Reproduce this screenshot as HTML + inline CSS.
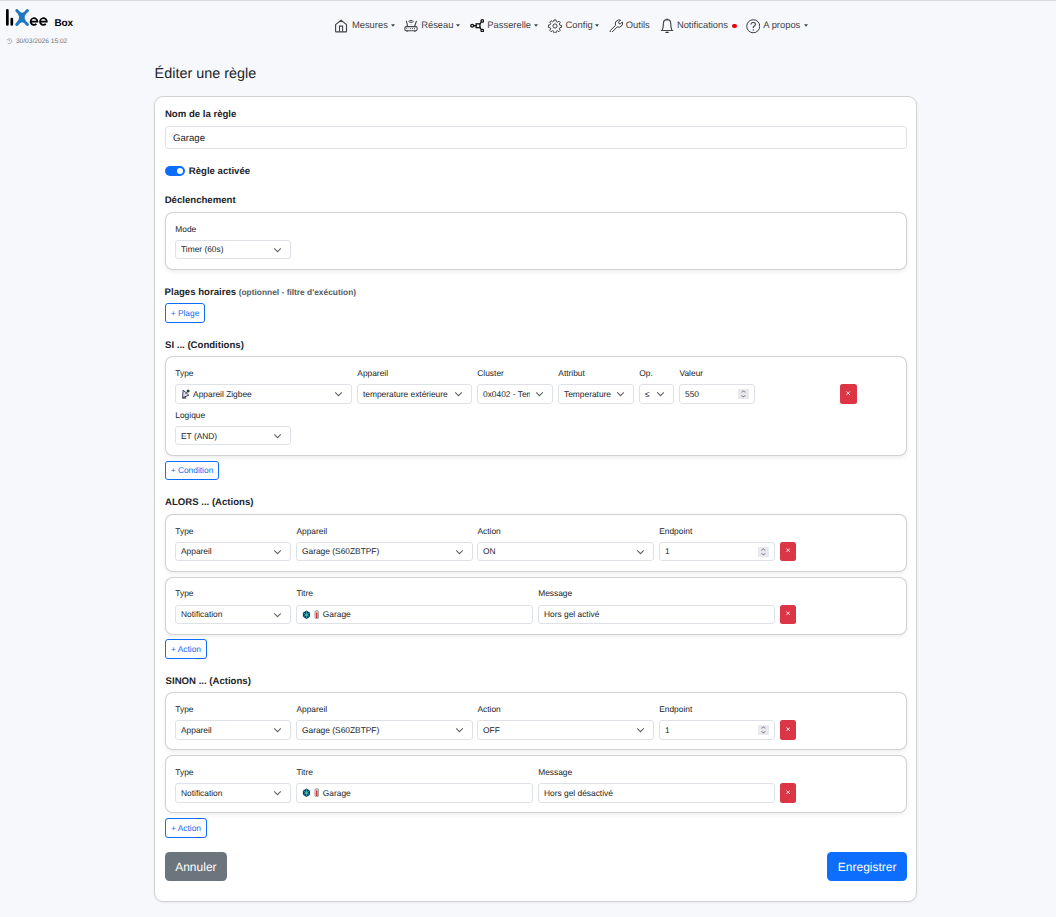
<!DOCTYPE html><html><head><meta charset="utf-8"><title>LiXee Box</title><style>
*{box-sizing:border-box}
html,body{margin:0;padding:0}
body{text-rendering:geometricPrecision;width:1056px;height:917px;position:relative;overflow:hidden;background:#f7f8fc;font-family:"Liberation Sans",sans-serif;color:#212529}
.t{position:absolute;white-space:nowrap;line-height:1}
.b{font-weight:bold}
.card,.ic,.ctl,.dbtn,.obtn,.btn{position:absolute}
.card{background:#fff;border:1px solid rgba(0,0,0,.18);border-radius:9px;box-shadow:0 1px 3px rgba(0,0,0,.05)}
.ic{background:#fff;border:1px solid rgba(0,0,0,.18);border-radius:8px;box-shadow:0 1.5px 4px rgba(0,0,0,.07)}
.ctl{background:#fff;border:1px solid #dee2e6;border-radius:3px}
.chev{position:absolute;right:7.9px;top:50%;width:9px;height:6px;margin-top:-3px}
.spin{position:absolute;right:5.5px;top:50%;width:11px;height:10px;margin-top:-5px;background:#e9e9ed}
.spin svg{position:absolute;left:0;top:0}
.dbtn{background:#dc3545;border-radius:2.5px}
.obtn{border:1px solid #0d6efd;border-radius:3px;background:#fff}
.btn{border-radius:4.5px}
</style></head><body>
<div style="position:absolute;left:0;top:0;width:1056px;height:1px;background:#dbdbdd"></div>
<svg style="position:absolute;left:0;top:0" width="60" height="30" viewBox="0 0 60 30">
<g stroke="#fff" stroke-width="1.6" fill="none" opacity=".9">
<path d="M7.35 10.4V24.4M11.8 19V24.4"/>
</g>
<path d="M7.35 10.4V24.4M11.8 19V24.4" stroke="#000" stroke-linecap="round" fill="none" stroke-width="2.7"/>
<path d="M18.18 9.64Q22.1 15.76 26.02 9.64A1.6 1.6 0 0 1 28.58 11.56Q20.7 17.5 28.58 23.44A1.6 1.6 0 0 1 26.02 25.36Q22.1 19.24 18.18 25.36A1.6 1.6 0 0 1 15.62 23.44Q23.1 17.5 15.62 11.56A1.6 1.6 0 0 1 18.18 9.64Z" fill="#1f78c1"/>
<path d="M30.6 21.55H37.4A3.4 3.4 0 1 0 36.4 23.95M40.0 21.55H46.8A3.4 3.4 0 1 0 45.8 23.95" fill="none" stroke="#000" stroke-width="1.75"/>
</svg>
<div class="t b" style="left:54.60px;top:19.14px;font-size:10.0px;color:#000;letter-spacing:-0.25px">Box</div>
<svg style="position:absolute;left:6px;top:38px" width="7" height="6" viewBox="0 0 14 12"><path d="M4 2.2A5 5 0 1 1 3 9.8" fill="none" stroke="#999" stroke-width="1.3"/><path d="M7 3.5V6.5L9 8" fill="none" stroke="#999" stroke-width="1.2"/><path d="M1.5 4.5 3.4 2 4.6 4.8" fill="none" stroke="#999" stroke-width="1"/></svg>
<div class="t " style="left:15.90px;top:38.81px;font-size:6.6px;color:#6c757d">30/03/2026 15:02</div>
<svg style="position:absolute;left:332px;top:16px" width="20" height="20" viewBox="0 0 20 20"><path d="M3.6 8.6 9.05 4.2 14.5 8.6V15.2Q14.5 15.8 13.9 15.8H4.2Q3.6 15.8 3.6 15.2Z" fill="none" stroke="#444" stroke-width="1.15" stroke-linejoin="round"/><path d="M7.5 15.8V10.1H10.6V15.8" fill="none" stroke="#444" stroke-width="1.1"/></svg>
<div class="t " style="left:351.90px;top:20.14px;font-size:9.4px;color:#3f4347">Mesures</div>
<svg style="position:absolute;left:390.6px;top:23.8px" width="4" height="3" viewBox="0 0 8 5"><path d="M0 0H8L4 5Z" fill="#3f4347"/></svg>
<svg style="position:absolute;left:402px;top:16px" width="20" height="20" viewBox="0 0 20 20" fill="none" stroke="#444"><rect x="2.85" y="10.6" width="12.3" height="4.1" rx="1.3" stroke-width="1.05"/><path d="M4.4 15.2H6.1M12 15.2H13.7" stroke-width=".9"/><path d="M4.4 4.9 5.6 10.3M14.5 5 12.6 10.3" stroke-width="1.1"/><path d="M6.4 5.5Q9 3.3 11.6 5.5M7.5 6.5Q9 5.6 10.5 6.5" stroke-width="1"/><g fill="#555" stroke="none"><circle cx="4.4" cy="12.6" r=".55"/><circle cx="8.5" cy="12.6" r=".55"/><circle cx="10.5" cy="12.6" r=".55"/><circle cx="12.5" cy="12.6" r=".55"/><circle cx="9" cy="8.2" r=".45"/><rect x="5.6" y="12.4" width="1.2" height=".4"/></g></svg>
<div class="t " style="left:421.20px;top:20.14px;font-size:9.4px;color:#3f4347">Réseau</div>
<svg style="position:absolute;left:456px;top:23.8px" width="4" height="3" viewBox="0 0 8 5"><path d="M0 0H8L4 5Z" fill="#3f4347"/></svg>
<svg style="position:absolute;left:469.5px;top:18.9px" width="14.5" height="13.5" viewBox="0 0 16 15"><circle cx="2.4" cy="7.5" r="1.6" fill="none" stroke="#111" stroke-width="1.5"/><rect x="6.8" y="5.4" width="4.2" height="4.2" fill="none" stroke="#111" stroke-width="1.5"/><circle cx="13.6" cy="2.1" r="1.4" fill="none" stroke="#111" stroke-width="1.4"/><circle cx="13.6" cy="12.9" r="1.4" fill="none" stroke="#111" stroke-width="1.4"/><path d="M4 7.5H6.8M10.8 5.6 12.6 3.1M10.8 9.4 12.6 11.9" stroke="#111" stroke-width="1.5"/></svg>
<div class="t " style="left:487.30px;top:20.14px;font-size:9.4px;color:#3f4347">Passerelle</div>
<svg style="position:absolute;left:534.3px;top:23.8px" width="4" height="3" viewBox="0 0 8 5"><path d="M0 0H8L4 5Z" fill="#3f4347"/></svg>
<svg style="position:absolute;left:547.8px;top:19px" width="14" height="14" viewBox="0 0 16 16"><path d="M6.9 1h2.2l.4 2 1.3.6 1.7-1.1 1.5 1.5-1.1 1.7.6 1.3 2 .4v2.2l-2 .4-.6 1.3 1.1 1.7-1.5 1.5-1.7-1.1-1.3.6-.4 2H6.9l-.4-2-1.3-.6-1.7 1.1-1.5-1.5 1.1-1.7-.6-1.3-2-.4V6.9l2-.4.6-1.3-1.1-1.7 1.5-1.5 1.7 1.1 1.3-.6z" fill="none" stroke="#3a3a3a" stroke-width="1.1" stroke-linejoin="round"/><circle cx="8" cy="8" r="2.4" fill="none" stroke="#3a3a3a" stroke-width="1.1"/></svg>
<div class="t " style="left:565.60px;top:20.14px;font-size:9.4px;color:#3f4347">Config</div>
<svg style="position:absolute;left:595px;top:23.8px" width="4" height="3" viewBox="0 0 8 5"><path d="M0 0H8L4 5Z" fill="#3f4347"/></svg>
<svg style="position:absolute;left:608.8px;top:18.7px" width="14.5" height="13.6" viewBox="0 0 16 15"><path d="M1.6 12.6 7.2 7Q6.2 4.2 8.2 2.2Q10.2 .4 12.8 1.2L10.6 3.4 11 5 12.6 5.4 14.8 3.2Q15.6 5.8 13.8 7.8Q11.8 9.8 9 8.8L3.4 14.4Q2.5 15.2 1.6 14.4Q.8 13.5 1.6 12.6Z" fill="none" stroke="#3a3a3a" stroke-width="1.1" stroke-linejoin="round"/></svg>
<div class="t " style="left:625.80px;top:20.14px;font-size:9.4px;color:#3f4347">Outils</div>
<svg style="position:absolute;left:656px;top:16px" width="24" height="20" viewBox="0 0 24 20"><path d="M6.3 14.2C7 12 7.4 10 7.4 7.6 7.4 5.2 9 3.7 11.05 3.7 13.1 3.7 14.7 5.2 14.7 7.6 14.7 10 15.1 12 15.8 14.2M5.3 14.5H16.8M11.05 2.8V3.8" fill="none" stroke="#444" stroke-width="1.15" stroke-linecap="round" stroke-linejoin="round"/><path d="M9.9 16.3H12.2" stroke="#333" stroke-width="1.3" stroke-linecap="round"/></svg>
<div class="t " style="left:676.90px;top:20.14px;font-size:9.4px;color:#3f4347">Notifications</div>
<div style="position:absolute;left:732.2px;top:23.6px;width:4.8px;height:4.8px;border-radius:50%;background:#e8000b"></div>
<svg style="position:absolute;left:745.5px;top:19px" width="14.5" height="14.5" viewBox="0 0 16 16"><circle cx="8" cy="8" r="7.2" fill="none" stroke="#3a3a3a" stroke-width="1.1"/><path d="M5.6 6.1Q5.6 3.8 8 3.8Q10.4 3.8 10.4 5.9Q10.4 7.2 8.9 7.9Q8 8.4 8 9.6V10" fill="none" stroke="#3a3a3a" stroke-width="1.2"/><circle cx="8" cy="12" r=".8" fill="#3a3a3a"/></svg>
<div class="t " style="left:763.30px;top:20.14px;font-size:9.4px;color:#3f4347">A propos</div>
<svg style="position:absolute;left:804px;top:23.8px" width="4" height="3" viewBox="0 0 8 5"><path d="M0 0H8L4 5Z" fill="#3f4347"/></svg>
<div class="t " style="left:154.60px;top:66.51px;font-size:14.4px;">Éditer une règle</div>
<div class="card" style="left:154px;top:96px;width:763px;height:806px;"></div>
<div class="t b" style="left:164.90px;top:109.67px;font-size:9.6px;">Nom de la règle</div>
<div class="ctl" style="left:165px;top:126px;width:742px;height:23px;"><div class="t" style="left:7.0px;top:6.77px;font-size:9.6px">Garage</div></div>
<div style="position:absolute;left:165px;top:166px;width:20px;height:10px;border-radius:5px;background:#0d6efd"><div style="position:absolute;right:1.8px;top:1.8px;width:6.4px;height:6.4px;border-radius:50%;background:#fff"></div></div>
<div class="t b" style="left:188.80px;top:166.87px;font-size:9.6px;">Règle activée</div>
<div class="t b" style="left:164.70px;top:195.87px;font-size:9.6px;">Déclenchement</div>
<div class="ic" style="left:165px;top:212px;width:742px;height:58px;"></div>
<div class="t " style="left:175.30px;top:224.79px;font-size:8.4px;">Mode</div>
<div class="ctl sel" style="left:175px;top:240px;width:116px;height:19px;"><div class="t" style="left:5.0px;right:21.6px;overflow:hidden;line-height:1.4;top:2.71px;font-size:8.4px">Timer (60s)</div><svg class="chev" viewBox="0 0 9 6"><path d="M1.2 1.4 4.5 4.7 7.8 1.4" fill="none" stroke="#5d6166" stroke-width="1.05"/></svg></div>
<div class="t b" style="left:164.60px;top:287.87px;font-size:9.6px;">Plages horaires <span style="font-size:8.4px;color:#565c62">(optionnel - filtre d'exécution)</span></div>
<div class="obtn" style="left:165px;top:303px;width:40px;height:20px;"><div class="t" style="left:0;width:100%;text-align:center;top:4.89px;font-size:8.4px;color:#0d6efd">+ Plage</div></div>
<div class="t b" style="left:165.00px;top:341.17px;font-size:9.6px;">SI ... (Conditions)</div>
<div class="ic" style="left:165px;top:356px;width:742px;height:100px;"></div>
<div class="t " style="left:175.30px;top:369.29px;font-size:8.4px;">Type</div>
<div class="t " style="left:357.30px;top:369.29px;font-size:8.4px;">Appareil</div>
<div class="t " style="left:477.30px;top:369.29px;font-size:8.4px;">Cluster</div>
<div class="t " style="left:558.30px;top:369.29px;font-size:8.4px;">Attribut</div>
<div class="t " style="left:639.30px;top:369.29px;font-size:8.4px;">Op.</div>
<div class="t " style="left:679.50px;top:369.29px;font-size:8.4px;">Valeur</div>
<div class="ctl sel" style="left:175px;top:384px;width:177px;height:20px;"><svg width="10" height="10" viewBox="0 0 10 10" style="position:absolute;left:4.8px;top:4.4px"><path d="M1.6 8.6 2.1 1.2 7.9 6.2Z" fill="#e6e6ea" stroke="#3d3a6e" stroke-width="1" stroke-linejoin="round"/><path d="M1.2 8.9H5.2" stroke="#444" stroke-width="1.4"/><path d="M4.2 5.2 6.4 2.6" stroke="#555" stroke-width=".8"/><circle cx="7.1" cy="1.9" r="1.5" fill="#1f4d1f"/></svg><div class="t" style="left:17.1px;right:21.6px;overflow:hidden;line-height:1.4;top:4.21px;font-size:8.4px">Appareil Zigbee</div><svg class="chev" viewBox="0 0 9 6"><path d="M1.2 1.4 4.5 4.7 7.8 1.4" fill="none" stroke="#5d6166" stroke-width="1.05"/></svg></div>
<div class="ctl sel" style="left:357px;top:384px;width:115px;height:20px;"><div class="t" style="left:5.0px;right:21.6px;overflow:hidden;line-height:1.4;top:4.21px;font-size:8.4px">temperature extérieure</div><svg class="chev" viewBox="0 0 9 6"><path d="M1.2 1.4 4.5 4.7 7.8 1.4" fill="none" stroke="#5d6166" stroke-width="1.05"/></svg></div>
<div class="ctl sel" style="left:477px;top:384px;width:76px;height:20px;"><div class="t" style="left:5.0px;right:21.6px;overflow:hidden;line-height:1.4;top:4.21px;font-size:8.4px">0x0402 - Temperature</div><svg class="chev" viewBox="0 0 9 6"><path d="M1.2 1.4 4.5 4.7 7.8 1.4" fill="none" stroke="#5d6166" stroke-width="1.05"/></svg></div>
<div class="ctl sel" style="left:558px;top:384px;width:76px;height:20px;"><div class="t" style="left:5.0px;right:21.6px;overflow:hidden;line-height:1.4;top:4.21px;font-size:8.4px">Temperature</div><svg class="chev" viewBox="0 0 9 6"><path d="M1.2 1.4 4.5 4.7 7.8 1.4" fill="none" stroke="#5d6166" stroke-width="1.05"/></svg></div>
<div class="ctl sel" style="left:639px;top:384px;width:35px;height:20px;"><div class="t" style="left:5.0px;right:21.6px;overflow:hidden;line-height:1.4;top:4.21px;font-size:8.4px">≤</div><svg class="chev" viewBox="0 0 9 6"><path d="M1.2 1.4 4.5 4.7 7.8 1.4" fill="none" stroke="#5d6166" stroke-width="1.05"/></svg></div>
<div class="ctl" style="left:679px;top:384px;width:76px;height:20px;"><div class="t" style="left:5.0px;top:4.89px;font-size:8.4px">550</div><div class="spin"><svg viewBox="0 0 11 10" width="11" height="10"><path d="M3.4 3.4 5.4 1.9 7.4 3.4M3.4 6.3 5.4 7.8 7.4 6.3" fill="none" stroke="#8f8f9d" stroke-width="1.05"/></svg></div></div>
<div class="dbtn" style="left:840px;top:384px;width:17px;height:20px;"><svg viewBox="0 0 10 10" style="position:absolute;left:50%;top:50%;width:4.4px;height:4.4px;margin:-3.1px 0 0 -2.3px"><path d="M1 1 9 9M9 1 1 9" stroke="#fff" stroke-width="2"/></svg></div>
<div class="t " style="left:175.30px;top:410.89px;font-size:8.4px;">Logique</div>
<div class="ctl sel" style="left:175px;top:426px;width:116px;height:19px;"><div class="t" style="left:5.0px;right:21.6px;overflow:hidden;line-height:1.4;top:3.71px;font-size:8.4px">ET (AND)</div><svg class="chev" viewBox="0 0 9 6"><path d="M1.2 1.4 4.5 4.7 7.8 1.4" fill="none" stroke="#5d6166" stroke-width="1.05"/></svg></div>
<div class="obtn" style="left:165px;top:461px;width:54px;height:19px;"><div class="t" style="left:0;width:100%;text-align:center;top:4.39px;font-size:8.4px;color:#0d6efd">+ Condition</div></div>
<div class="t b" style="left:165.00px;top:497.87px;font-size:9.6px;">ALORS ... (Actions)</div>
<div class="ic" style="left:165px;top:514px;width:742px;height:58px;"></div>
<div class="t " style="left:175.30px;top:526.69px;font-size:8.4px;">Type</div>
<div class="t " style="left:296.40px;top:526.69px;font-size:8.4px;">Appareil</div>
<div class="t " style="left:477.50px;top:526.69px;font-size:8.4px;">Action</div>
<div class="t " style="left:659.20px;top:526.69px;font-size:8.4px;">Endpoint</div>
<div class="ctl sel" style="left:175px;top:542px;width:116px;height:19px;"><div class="t" style="left:5.0px;right:21.6px;overflow:hidden;line-height:1.4;top:2.71px;font-size:8.4px">Appareil</div><svg class="chev" viewBox="0 0 9 6"><path d="M1.2 1.4 4.5 4.7 7.8 1.4" fill="none" stroke="#5d6166" stroke-width="1.05"/></svg></div>
<div class="ctl sel" style="left:296px;top:542px;width:177px;height:19px;"><div class="t" style="left:5.0px;right:21.6px;overflow:hidden;line-height:1.4;top:2.71px;font-size:8.4px">Garage (S60ZBTPF)</div><svg class="chev" viewBox="0 0 9 6"><path d="M1.2 1.4 4.5 4.7 7.8 1.4" fill="none" stroke="#5d6166" stroke-width="1.05"/></svg></div>
<div class="ctl sel" style="left:477px;top:542px;width:177px;height:19px;"><div class="t" style="left:5.0px;right:21.6px;overflow:hidden;line-height:1.4;top:2.71px;font-size:8.4px">ON</div><svg class="chev" viewBox="0 0 9 6"><path d="M1.2 1.4 4.5 4.7 7.8 1.4" fill="none" stroke="#5d6166" stroke-width="1.05"/></svg></div>
<div class="ctl" style="left:659px;top:542px;width:116px;height:19px;"><div class="t" style="left:5.0px;top:4.39px;font-size:8.4px">1</div><div class="spin"><svg viewBox="0 0 11 10" width="11" height="10"><path d="M3.4 3.4 5.4 1.9 7.4 3.4M3.4 6.3 5.4 7.8 7.4 6.3" fill="none" stroke="#8f8f9d" stroke-width="1.05"/></svg></div></div>
<div class="dbtn" style="left:780px;top:542px;width:16px;height:19px;"><svg viewBox="0 0 10 10" style="position:absolute;left:50%;top:50%;width:4.4px;height:4.4px;margin:-3.1px 0 0 -2.3px"><path d="M1 1 9 9M9 1 1 9" stroke="#fff" stroke-width="2"/></svg></div>
<div class="ic" style="left:165px;top:577px;width:742px;height:58px;"></div>
<div class="t " style="left:175.30px;top:588.69px;font-size:8.4px;">Type</div>
<div class="t " style="left:296.40px;top:588.69px;font-size:8.4px;">Titre</div>
<div class="t " style="left:538.20px;top:588.69px;font-size:8.4px;">Message</div>
<div class="ctl sel" style="left:175px;top:605px;width:116px;height:19px;"><div class="t" style="left:5.0px;right:21.6px;overflow:hidden;line-height:1.4;top:2.71px;font-size:8.4px">Notification</div><svg class="chev" viewBox="0 0 9 6"><path d="M1.2 1.4 4.5 4.7 7.8 1.4" fill="none" stroke="#5d6166" stroke-width="1.05"/></svg></div>
<div class="ctl" style="left:296px;top:605px;width:237px;height:19px;"><svg width="9" height="9.5" viewBox="0 0 10 10" style="position:absolute;left:5.4px;top:3.5px"><path d="M5 .4 9 2.7V7.3L5 9.6 1 7.3V2.7Z" fill="#16384f"/><path d="M5 1.2V8.8M1.7 3.1 8.3 6.9M8.3 3.1 1.7 6.9" stroke="#2fb0cf" stroke-width="1"/><circle cx="5" cy="5" r="1.2" fill="#3fd0a0"/></svg><svg width="5.5" height="9.5" viewBox="0 0 6 10" style="position:absolute;left:16.8px;top:3.5px"><rect x="1" y=".4" width="4" height="9.2" rx="2" fill="#d5d9df" stroke="#6f7480" stroke-width=".7"/><rect x="2.2" y="2.2" width="1.6" height="6.6" rx=".8" fill="#e0352b"/></svg><div class="t" style="left:25.8px;top:4.39px;font-size:8.4px">Garage</div></div>
<div class="ctl" style="left:538px;top:605px;width:237px;height:19px;"><div class="t" style="left:5.0px;top:4.39px;font-size:8.4px">Hors gel activé</div></div>
<div class="dbtn" style="left:780px;top:605px;width:16px;height:19px;"><svg viewBox="0 0 10 10" style="position:absolute;left:50%;top:50%;width:4.4px;height:4.4px;margin:-3.1px 0 0 -2.3px"><path d="M1 1 9 9M9 1 1 9" stroke="#fff" stroke-width="2"/></svg></div>
<div class="obtn" style="left:165px;top:639px;width:42px;height:20px;"><div class="t" style="left:0;width:100%;text-align:center;top:4.89px;font-size:8.4px;color:#0d6efd">+ Action</div></div>
<div class="t b" style="left:165.60px;top:676.87px;font-size:9.6px;">SINON ... (Actions)</div>
<div class="ic" style="left:165px;top:692px;width:742px;height:58px;"></div>
<div class="t " style="left:175.30px;top:704.69px;font-size:8.4px;">Type</div>
<div class="t " style="left:296.40px;top:704.69px;font-size:8.4px;">Appareil</div>
<div class="t " style="left:477.50px;top:704.69px;font-size:8.4px;">Action</div>
<div class="t " style="left:659.20px;top:704.69px;font-size:8.4px;">Endpoint</div>
<div class="ctl sel" style="left:175px;top:720px;width:116px;height:20px;"><div class="t" style="left:5.0px;right:21.6px;overflow:hidden;line-height:1.4;top:4.21px;font-size:8.4px">Appareil</div><svg class="chev" viewBox="0 0 9 6"><path d="M1.2 1.4 4.5 4.7 7.8 1.4" fill="none" stroke="#5d6166" stroke-width="1.05"/></svg></div>
<div class="ctl sel" style="left:296px;top:720px;width:177px;height:20px;"><div class="t" style="left:5.0px;right:21.6px;overflow:hidden;line-height:1.4;top:4.21px;font-size:8.4px">Garage (S60ZBTPF)</div><svg class="chev" viewBox="0 0 9 6"><path d="M1.2 1.4 4.5 4.7 7.8 1.4" fill="none" stroke="#5d6166" stroke-width="1.05"/></svg></div>
<div class="ctl sel" style="left:477px;top:720px;width:177px;height:20px;"><div class="t" style="left:5.0px;right:21.6px;overflow:hidden;line-height:1.4;top:4.21px;font-size:8.4px">OFF</div><svg class="chev" viewBox="0 0 9 6"><path d="M1.2 1.4 4.5 4.7 7.8 1.4" fill="none" stroke="#5d6166" stroke-width="1.05"/></svg></div>
<div class="ctl" style="left:659px;top:720px;width:116px;height:20px;"><div class="t" style="left:5.0px;top:4.89px;font-size:8.4px">1</div><div class="spin"><svg viewBox="0 0 11 10" width="11" height="10"><path d="M3.4 3.4 5.4 1.9 7.4 3.4M3.4 6.3 5.4 7.8 7.4 6.3" fill="none" stroke="#8f8f9d" stroke-width="1.05"/></svg></div></div>
<div class="dbtn" style="left:780px;top:720px;width:16px;height:20px;"><svg viewBox="0 0 10 10" style="position:absolute;left:50%;top:50%;width:4.4px;height:4.4px;margin:-3.1px 0 0 -2.3px"><path d="M1 1 9 9M9 1 1 9" stroke="#fff" stroke-width="2"/></svg></div>
<div class="ic" style="left:165px;top:755px;width:742px;height:58px;"></div>
<div class="t " style="left:175.30px;top:767.69px;font-size:8.4px;">Type</div>
<div class="t " style="left:296.40px;top:767.69px;font-size:8.4px;">Titre</div>
<div class="t " style="left:538.20px;top:767.69px;font-size:8.4px;">Message</div>
<div class="ctl sel" style="left:175px;top:783px;width:116px;height:20px;"><div class="t" style="left:5.0px;right:21.6px;overflow:hidden;line-height:1.4;top:4.21px;font-size:8.4px">Notification</div><svg class="chev" viewBox="0 0 9 6"><path d="M1.2 1.4 4.5 4.7 7.8 1.4" fill="none" stroke="#5d6166" stroke-width="1.05"/></svg></div>
<div class="ctl" style="left:296px;top:783px;width:237px;height:20px;"><svg width="9" height="9.5" viewBox="0 0 10 10" style="position:absolute;left:5.4px;top:3.5px"><path d="M5 .4 9 2.7V7.3L5 9.6 1 7.3V2.7Z" fill="#16384f"/><path d="M5 1.2V8.8M1.7 3.1 8.3 6.9M8.3 3.1 1.7 6.9" stroke="#2fb0cf" stroke-width="1"/><circle cx="5" cy="5" r="1.2" fill="#3fd0a0"/></svg><svg width="5.5" height="9.5" viewBox="0 0 6 10" style="position:absolute;left:16.8px;top:3.5px"><rect x="1" y=".4" width="4" height="9.2" rx="2" fill="#d5d9df" stroke="#6f7480" stroke-width=".7"/><rect x="2.2" y="2.2" width="1.6" height="6.6" rx=".8" fill="#e0352b"/></svg><div class="t" style="left:25.8px;top:4.89px;font-size:8.4px">Garage</div></div>
<div class="ctl" style="left:538px;top:783px;width:237px;height:20px;"><div class="t" style="left:5.0px;top:4.89px;font-size:8.4px">Hors gel désactivé</div></div>
<div class="dbtn" style="left:780px;top:783px;width:16px;height:20px;"><svg viewBox="0 0 10 10" style="position:absolute;left:50%;top:50%;width:4.4px;height:4.4px;margin:-3.1px 0 0 -2.3px"><path d="M1 1 9 9M9 1 1 9" stroke="#fff" stroke-width="2"/></svg></div>
<div class="obtn" style="left:165px;top:818px;width:42px;height:20px;"><div class="t" style="left:0;width:100%;text-align:center;top:4.89px;font-size:8.4px;color:#0d6efd">+ Action</div></div>
<div class="btn" style="left:165px;top:852px;width:62px;height:29px;background:#6c757d"><div class="t " style="left:0.00px;top:-10.16px;font-size:12px;"></div>
</div>
<div class="t " style="left:175.20px;top:860.84px;font-size:12px;color:#fff">Annuler</div>
<div class="btn" style="left:827px;top:852px;width:80px;height:29px;background:#0d6efd"></div>
<div class="t " style="left:837.80px;top:860.84px;font-size:12px;color:#fff">Enregistrer</div>
</body></html>
